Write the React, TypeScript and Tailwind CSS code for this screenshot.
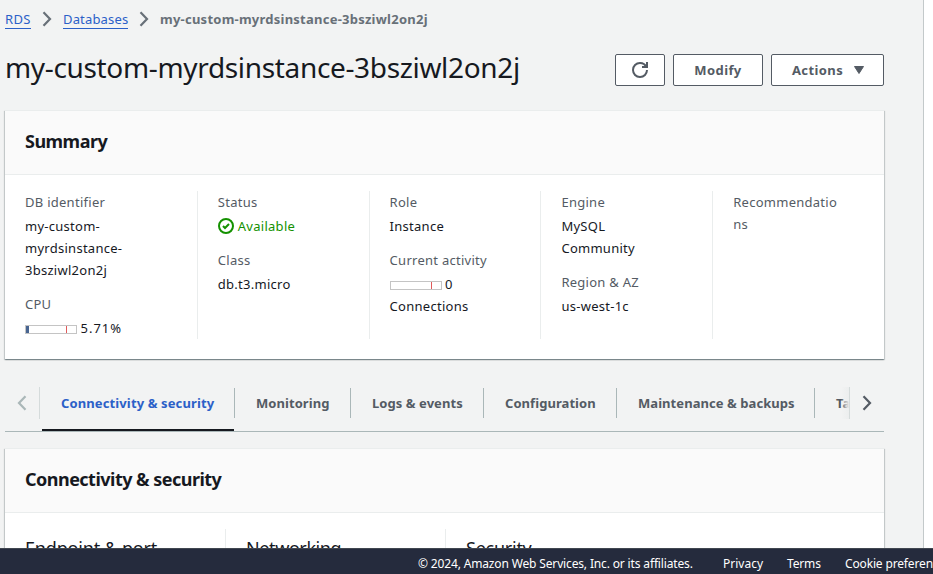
import type { ReactNode } from "react";

function Chevron({ left = false, className = "" }: { left?: boolean; className?: string }) {
  return (
    <svg viewBox="0 0 10 16" className={`h-4 w-2.5 shrink-0 ${className}`} fill="none" stroke="currentColor" strokeWidth="2.200">
      <path d={left ? "M8.500 1.200 2 8l6.500 6.800" : "M1.500 1.200 8 8l-6.500 6.800"} />
    </svg>
  );
}

function Field({ label, children }: { label: ReactNode; children?: ReactNode }) {
  return (
    <div>
      <div className="mb-0.5 text-[#545b64]">{label}</div>
      <div>{children}</div>
    </div>
  );
}

function Column({ first = false, children }: { first?: boolean; children: ReactNode }) {
  return (
    <div className={`flex flex-col gap-3 ${first ? "" : "border-l border-[#eaeded] pl-5"}`}>{children}</div>
  );
}

function Meter({ used = false }: { used?: boolean }) {
  return (
    <span className="mr-[3.500px] mb-px inline-flex h-[9px] w-[52px] border border-[#c4c4c4] bg-white">
      <span className={`h-full w-[3px] ${used ? "bg-[#486591]" : ""}`} />
      <span className="ml-[37px] h-full w-px bg-[#e05a5a]" />
    </span>
  );
}

function Panel({ title, className, children }: { title: string; className: string; children: ReactNode }) {
  return (
    <section
      className={`border-t border-[#eaeded] bg-white shadow-[0_1px_1px_0_rgba(0,28,36,0.3),1px_1px_1px_0_rgba(0,28,36,0.15),-1px_1px_1px_0_rgba(0,28,36,0.15)] ${className}`}
    >
      <h2 className="flex h-16 items-center border-b border-[#eaeded] bg-[#fafafa] px-5 pb-1 text-[18px] font-bold tracking-[-0.520px]">
        {title}
      </h2>
      {children}
    </section>
  );
}

function Tab({ label, width, active = false }: { label: string; width: string; active?: boolean }) {
  return (
    <div className={`flex h-[47px] shrink-0 flex-col ${width} ${active ? "text-[#2b60c8]" : ""}`}>
      <div
        className={`mt-1 flex h-[30px] items-center border-r border-[#aab7b8] whitespace-nowrap ${active ? "pl-[19px] tracking-[0.120px]" : "pl-[21px] tracking-[0.060px]"}`}
      >
        {label}
      </div>
      {active && <div className="mt-auto mr-px h-0.5 bg-[#16191f]" />}
    </div>
  );
}

export default function App() {
  return (
    <div className="flex h-[574px] w-[933px] flex-col overflow-hidden bg-white font-['Noto_Sans',sans-serif] text-[14px] leading-[22px] text-[#16191f]">
      <main className="h-[548px] w-[924px] overflow-hidden border-r border-[#c3c9ca] bg-[#f2f3f3] pl-[5px]">
        <nav className="flex h-[38px] items-center text-[13px] tracking-[0.170px] text-[#2b60c8]">
          <a className="mt-px w-[26px] border-b border-[#2b60c8] leading-[18px] tracking-[0.300px]">RDS</a>
          <Chevron className="mx-[11px] text-[#687078]" />
          <a className="mt-px w-[65px] border-b border-[#2b60c8] leading-[18px]">Databases</a>
          <Chevron className="mx-[11px] text-[#687078]" />
          <span className="font-bold tracking-[0.240px] text-[#687078]">my-custom-myrdsinstance-3bsziwl2on2j</span>
        </nav>

        <header className="flex h-[72px] w-[879px] items-start justify-between">
          <h1 className="mt-[11px] text-[28px] leading-9 tracking-[-0.340px] whitespace-nowrap">
            my-custom-myrdsinstance-3bsziwl2on2j
          </h1>
          <div className="mt-4 flex gap-2 text-[13px] font-bold tracking-[0.400px] text-[#545b64]">
            <button className="flex h-8 w-[50px] items-center justify-center rounded-xs border border-[#545b64] bg-white">
              <svg viewBox="0 0 16 16" className="size-4" fill="none" stroke="currentColor" strokeWidth="2">
                <path d="M10 5h5V0" />
                <path d="M15 8a6.957 6.957 0 0 1-7 7 6.957 6.957 0 0 1-7-7 6.957 6.957 0 0 1 7-7 6.870 6.870 0 0 1 6.300 4" />
              </svg>
            </button>
            <button className="flex h-8 w-[90px] items-center justify-center rounded-xs border border-[#545b64] bg-white">Modify</button>
            <button className="flex h-8 w-[113px] items-center justify-center gap-[11px] rounded-xs border border-[#545b64] bg-white pl-px">
              Actions
              <svg viewBox="0 0 10 8" className="h-2 w-2.5" fill="currentColor" stroke="currentColor" strokeLinejoin="round">
                <path d="M.5.5h9L5 7.500z" />
              </svg>
            </button>
          </div>
        </header>

        <Panel title="Summary" className="h-[249px] w-[879px]">
          <div className="mt-4 ml-5 grid h-[148px] grid-cols-5 text-[13px] tracking-[0.270px]">
            <Column first>
              <Field label="DB identifier">
                my-custom-
                <br />
                myrdsinstance-
                <br />
                3bsziwl2on2j
              </Field>
              <Field label="CPU">
                <Meter used />
                <span className="tracking-[1px]">5.71%</span>
              </Field>
            </Column>
            <Column>
              <Field label="Status">
                <span className="flex items-center text-[#149100]">
                  <svg viewBox="0 0 16 16" className="mr-1 size-4" fill="none" stroke="currentColor" strokeWidth="2">
                    <circle cx="8" cy="8" r="7" />
                    <path d="m5 8 2 2 4-4" />
                  </svg>
                  Available
                </span>
              </Field>
              <Field label="Class">db.t3.micro</Field>
            </Column>
            <Column>
              <Field label="Role">Instance</Field>
              <Field label="Current activity">
                <Meter />0
                <br />
                Connections
              </Field>
            </Column>
            <Column>
              <Field label="Engine">
                MySQL
                <br />
                Community
              </Field>
              <Field label="Region & AZ">us-west-1c</Field>
            </Column>
            <Column>
              <Field
                label={
                  <>
                    Recommendatio
                    <br />
                    ns
                  </>
                }
              />
            </Column>
          </div>
        </Panel>

        <div className="mt-6 flex h-[49px] w-[879px] border-b border-[#aab7b8] pt-px text-[13px] font-bold text-[#545b64]">
          <div className="mt-[3px] mr-0.5 flex h-8 w-[35px] shrink-0 items-center justify-center border-r border-[#d5dbdb]">
            <Chevron left className="text-[#aab7b8]" />
          </div>
          <div className="relative flex w-[807px] shrink-0 overflow-hidden">
            <Tab label="Connectivity & security" width="w-[193px]" active />
            <Tab label="Monitoring" width="w-[116px]" />
            <Tab label="Logs & events" width="w-[133px]" />
            <Tab label="Configuration" width="w-[133px]" />
            <Tab label="Maintenance & backups" width="w-[198px]" />
            <Tab label="Tags" width="w-[80px]" />
            <div className="absolute top-[3px] right-0 h-8 w-2 bg-linear-to-r from-transparent to-[#eceeee]" />
          </div>
          <div className="mt-[3px] flex h-8 w-[35px] items-center justify-center border-l border-[#d5dbdb]">
            <Chevron />
          </div>
        </div>

        <Panel title="Connectivity & security" className="mt-4 h-[200px] w-[879px]">
          <div className="mt-4 ml-5 flex text-[18px] leading-[38px]">
            <div className="h-20 w-[200px] tracking-[-0.180px]">Endpoint & port</div>
            <div className="h-20 w-[220px] border-l border-[#eaeded] pl-5 tracking-[-0.400px]">Networking</div>
            <div className="h-20 border-l border-[#eaeded] pl-5 tracking-[-0.250px]">Security</div>
          </div>
        </Panel>
      </main>
      <footer className="flex h-[26px] items-center border-t border-[#414750] bg-[#252b3d] pt-[5px] pl-[418px] text-[12px] leading-[20px] tracking-[-0.150px] whitespace-nowrap text-white">
        <span className="w-[305px] shrink-0">© 2024, Amazon Web Services, Inc. or its affiliates.</span>
        <span className="w-16 shrink-0 tracking-normal">Privacy</span>
        <span className="w-[58px] shrink-0">Terms</span>
        <span>Cookie preferences</span>
      </footer>
    </div>
  );
}
